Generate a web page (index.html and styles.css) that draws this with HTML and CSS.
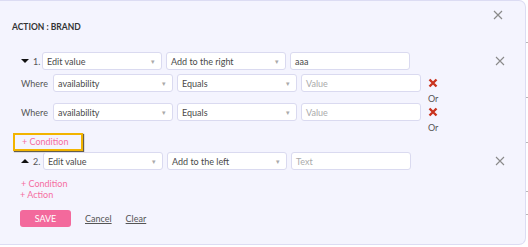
FILE: index.html
```html
<!DOCTYPE html>
<html lang="en">
<head>
    <meta charset="UTF-8">
    <title>Action : Brand</title>
    <link rel="stylesheet" href="styles.css">
</head>
<body>
    <div class="page">
        <div class="modal">
            <button class="close-btn" type="button" aria-label="Close">
                <svg width="10" height="10" viewBox="0 0 10 10"><path d="M1 1L9 9M9 1L1 9" stroke="#8a8a8a" stroke-width="1.2"/></svg>
            </button>
            <h3 class="title">ACTION : BRAND</h3>

            <!-- action 1 -->
            <div class="action-row first">
                <span class="toggle down"></span>
                <span class="num">1.</span>
                <div class="select">Edit value<span class="caret">&#9662;</span></div>
                <div class="select">Add to the right<span class="caret">&#9662;</span></div>
                <div class="field">aaa</div>
                <button class="remove" type="button" aria-label="Remove">
                    <svg width="10" height="10" viewBox="0 0 10 10"><path d="M1 1L9 9M9 1L1 9" stroke="#8a8a8a" stroke-width="1.1"/></svg>
                </button>
            </div>

            <div class="cond">
                <div class="cond-row">
                    <span class="where">Where</span>
                    <div class="select">availability<span class="caret">&#9662;</span></div>
                    <div class="select">Equals<span class="caret">&#9662;</span></div>
                    <div class="field placeholder">Value</div>
                    <span class="del">
                        <svg width="10" height="10" viewBox="0 0 10 10"><path d="M1.5 1.5L8.5 8.5M8.5 1.5L1.5 8.5" stroke="#c9331f" stroke-width="2.4"/></svg>
                    </span>
                </div>
                <div class="or">Or</div>
            </div>
            <div class="cond">
                <div class="cond-row">
                    <span class="where">Where</span>
                    <div class="select">availability<span class="caret">&#9662;</span></div>
                    <div class="select">Equals<span class="caret">&#9662;</span></div>
                    <div class="field placeholder">Value</div>
                    <span class="del">
                        <svg width="10" height="10" viewBox="0 0 10 10"><path d="M1.5 1.5L8.5 8.5M8.5 1.5L1.5 8.5" stroke="#c9331f" stroke-width="2.4"/></svg>
                    </span>
                </div>
                <div class="or">Or</div>
            </div>

            <div class="add-cond-wrap">
                <a class="link-pink highlighted">+ Condition</a>
            </div>

            <!-- action 2 -->
            <div class="action-row">
                <span class="toggle up"></span>
                <span class="num two">2.</span>
                <div class="select">Edit value<span class="caret">&#9662;</span></div>
                <div class="select">Add to the left<span class="caret">&#9662;</span></div>
                <div class="field placeholder">Text</div>
                <button class="remove" type="button" aria-label="Remove">
                    <svg width="10" height="10" viewBox="0 0 10 10"><path d="M1 1L9 9M9 1L1 9" stroke="#8a8a8a" stroke-width="1.1"/></svg>
                </button>
            </div>

            <div class="links">
                <a class="link-pink">+ Condition</a>
                <a class="link-pink">+ Action</a>
            </div>

            <div class="footer">
                <button class="save" type="button">SAVE</button>
                <a class="plain">Cancel</a>
                <a class="plain">Clear</a>
            </div>
        </div>
        <div class="behind">
            <span class="tick" style="margin-top:42px"></span>
            <span class="tick" style="margin-top:54px"></span>
            <span class="tick" style="margin-top:44px"></span>
            <span class="tick" style="margin-top:48px"></span>
            <span class="tick" style="margin-top:22px"></span>
        </div>
    </div>
</body>
</html>
```

FILE: styles.css
```css
body {
    margin: 0;
    background-color: #ffffff;
    font-family: Lato, "Open Sans", sans-serif;
    color: #444;
}

.page {
    display: flex;
    width: 528px;
    height: 247px;
}

.modal {
    position: relative;
    box-sizing: border-box;
    width: 526px;
    height: 245px;
    background-color: #f4f4fe;
    border: 1px solid #dcdcf3;
    border-left: none;
    border-radius: 0 7px 7px 0;
    padding: 0 0 0 21px;
}

.close-btn {
    position: absolute;
    top: 9px;
    right: 22px;
    background: none;
    border: none;
    padding: 0;
    line-height: 0;
}

.title {
    margin: 20px 0 0 -9px;
    font-size: 8.5px;
    font-weight: bold;
    color: #333;
    height: 12px;
    line-height: 12px;
}

.action-row {
    display: flex;
    align-items: center;
    height: 18px;
}

.action-row.first {
    margin-top: 19px;
}

.toggle {
    width: 0;
    height: 0;
    border-left: 4px solid transparent;
    border-right: 4px solid transparent;
    margin-right: 4px;
}

.toggle.down {
    border-top: 4.5px solid #111;
}

.toggle.up {
    border-bottom: 4.5px solid #111;
}

.num {
    font-size: 9px;
    color: #555;
    width: 9px;
}

.num.two {
    width: 10px;
}

.select,
.field {
    box-sizing: border-box;
    display: flex;
    align-items: center;
    justify-content: space-between;
    width: 120px;
    height: 18px;
    background-color: #fff;
    border: 1px solid #dadaf0;
    border-radius: 3px;
    padding: 0 6px 0 4px;
    font-size: 9px;
    color: #4a4a4a;
    margin-right: 4px;
}

.caret {
    font-size: 7px;
    color: #aaa;
}

.field.placeholder {
    color: #aaa;
}

.remove {
    margin-left: auto;
    margin-right: 20px;
    background: none;
    border: none;
    padding: 0;
    line-height: 0;
}

.cond {
    display: flex;
    flex-direction: column;
}

.action-row.first + .cond {
    margin-top: 4px;
}

.cond-row {
    display: flex;
    align-items: center;
    height: 18px;
}

.where {
    font-size: 9px;
    color: #555;
    width: 32px;
}

.del {
    margin-left: 3px;
    line-height: 0;
}

.or {
    font-size: 9px;
    color: #555;
    height: 11px;
    line-height: 13px;
    padding-left: 407px;
}

.add-cond-wrap {
    margin: 1px 0 1px -8px;
}

.link-pink {
    display: block;
    font-size: 9px;
    color: #f46ea2;
    line-height: 11px;
}

.highlighted {
    box-sizing: border-box;
    width: 70px;
    height: 18px;
    line-height: 14px;
    padding-left: 7px;
    border: 2px solid #f2b400;
    box-shadow: 1px 1px 1px rgba(40, 30, 0, 0.7);
}

.links {
    margin-top: 8px;
}

.links .link-pink:last-child {
    margin-left: -1px;
}

.footer {
    display: flex;
    align-items: center;
    margin-top: 10px;
}

.save {
    width: 51px;
    height: 17px;
    background-color: #f3699c;
    color: #fff;
    border: none;
    border-radius: 3px;
    font-family: inherit;
    font-size: 9px;
    margin-left: -1px;
    padding: 0;
}

.plain {
    font-size: 9px;
    color: #555;
    text-decoration: underline;
    margin-left: 14px;
}

.behind {
    display: flex;
    flex-direction: column;
    width: 2px;
}

.tick {
    display: block;
    width: 2px;
    height: 1px;
    background-color: #b8b8b8;
}
```
